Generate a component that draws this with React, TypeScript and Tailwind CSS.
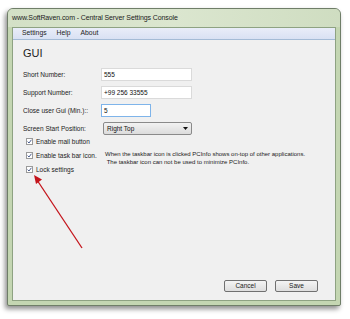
import React from 'react';

const font = { fontFamily: '"Liberation Sans", Arial, sans-serif' };

const Check: React.FC<{ label: string }> = ({ label }) => (
  <div className="flex items-center gap-[3px] h-[13px]">
    <span className="w-[7px] h-[7px] border border-[#9a9a9a] bg-white flex items-center justify-center">
      <svg width="5" height="5" viewBox="0 0 5 5">
        <path d="M0.6 2.6 L2 4 L4.4 0.8" fill="none" stroke="#4a5d8e" strokeWidth="1" />
      </svg>
    </span>
    <span className="text-[6.5px] text-[#222]">{label}</span>
  </div>
);

const App: React.FC = () => {
  const fields = [
    { label: 'Short Number:', value: '555', w: 'w-[91px]' },
    { label: 'Support Number:', value: '+99 256 33555', w: 'w-[91px]' },
  ];

  return (
    <div className="w-[350px] h-[319px] bg-white pl-[7px] pt-[8px] relative overflow-hidden" style={font}>
      {/* window */}
      <div className="w-[334px] h-[298px] rounded-t-[6px] rounded-b-[2px] border border-[#6f7e68] bg-[#c4d6b2] shadow-[-2px_3px_5px_rgba(0,0,0,0.45)] flex flex-col">
        {/* title bar */}
        <div className="h-[18px] rounded-t-[5px] bg-gradient-to-r from-[#d3e0c6] via-[#dbe6cf] to-[#cfddc1] flex items-center pl-[4px]">
          <span className="text-[7px] text-[#1b1b1b] tracking-[-0.1px]">www.SoftRaven.com - Central Server Settings Console</span>
        </div>
        <div className="flex-1 mx-[4px] mb-[4px] border border-[#8ea282] flex flex-col">
          {/* menu */}
          <div className="h-[12px] bg-gradient-to-b from-[#e9edf9] to-[#d9e1f3] border-b border-[#a4bbd6] flex items-center gap-[10px] pl-[9px]">
            <span className="text-[6.8px] text-[#222]">Settings</span>
            <span className="text-[6.8px] text-[#222]">Help</span>
            <span className="text-[6.8px] text-[#222]">About</span>
          </div>
          {/* content */}
          <div className="flex-1 bg-[#f0f0f0] flex flex-col pl-[10px] pt-[8px]">
            <div className="text-[11px] leading-[11px] text-[#1e1e1e]">GUI</div>
            <div className="flex flex-col gap-[5px] mt-[9px]">
              {fields.map((f, i) => (
                <div key={i} className="flex items-center h-[13px]">
                  <span className="w-[78px] text-[6.5px] text-[#222]">{f.label}</span>
                  <div className={`${f.w} h-[13px] bg-white border border-[#dadada] flex items-center pl-[2px] text-[6.5px] text-[#111]`}>
                    {f.value}
                  </div>
                </div>
              ))}
              <div className="flex items-center h-[13px]">
                <span className="w-[78px] text-[6.5px] text-[#222]">Close user Gui (Min.)::</span>
                <div className="w-[50px] h-[13px] bg-white border border-[#7eb4ea] flex items-center pl-[2px] text-[6.5px] text-[#111]">5</div>
              </div>
              <div className="flex items-center h-[13px]">
                <span className="w-[80px] text-[6.5px] text-[#222]">Screen Start Position:</span>
                <div className="w-[89px] h-[13px] rounded-[2px] bg-gradient-to-b from-[#f2f2f2] to-[#dcdcdc] border border-[#8a8a8a] flex items-center justify-between pl-[3px] pr-[3px] text-[6.5px] text-[#111]">
                  Right Top
                  <svg width="5" height="3" viewBox="0 0 5 3">
                    <path d="M0 0 H5 L2.5 3 Z" fill="#111" />
                  </svg>
                </div>
              </div>
            </div>
            <div className="flex pl-[3px]">
              <div className="flex flex-col gap-[1px] w-[79px]">
                <Check label="Enable mail button" />
                <Check label="Enable task bar icon." />
                <Check label="Lock settings" />
              </div>
              <div className="mt-[15px] text-[6px] leading-[8px] text-[#222]">
                <div>When the taskbar icon is clicked PCInfo shows on-top of other applications.</div>
                <div>&nbsp;The taskbar icon can not be used to minimize PCInfo.</div>
              </div>
            </div>
            <div className="flex-1" />
            <div className="flex justify-end gap-[8px] pr-[17px] pb-[8px]">
              <button className="w-[43px] h-[12px] rounded-[2px] border border-[#707070] bg-gradient-to-b from-[#f4f4f4] to-[#dedede] text-[6.5px] text-[#222] flex items-center justify-center">Cancel</button>
              <button className="w-[43px] h-[12px] rounded-[2px] border border-[#707070] bg-gradient-to-b from-[#f4f4f4] to-[#dedede] text-[6.5px] text-[#222] flex items-center justify-center">Save</button>
            </div>
          </div>
        </div>
      </div>
      {/* red annotation arrow */}
      <svg className="absolute left-0 top-0" width="350" height="319" viewBox="0 0 350 319">
        <line x1="82" y1="248" x2="37" y2="180" stroke="#c4141b" strokeWidth="1.3" />
        <path d="M34 175 L42 179.5 L36 184 Z" fill="#c4141b" />
      </svg>
    </div>
  );
};

export default App;
